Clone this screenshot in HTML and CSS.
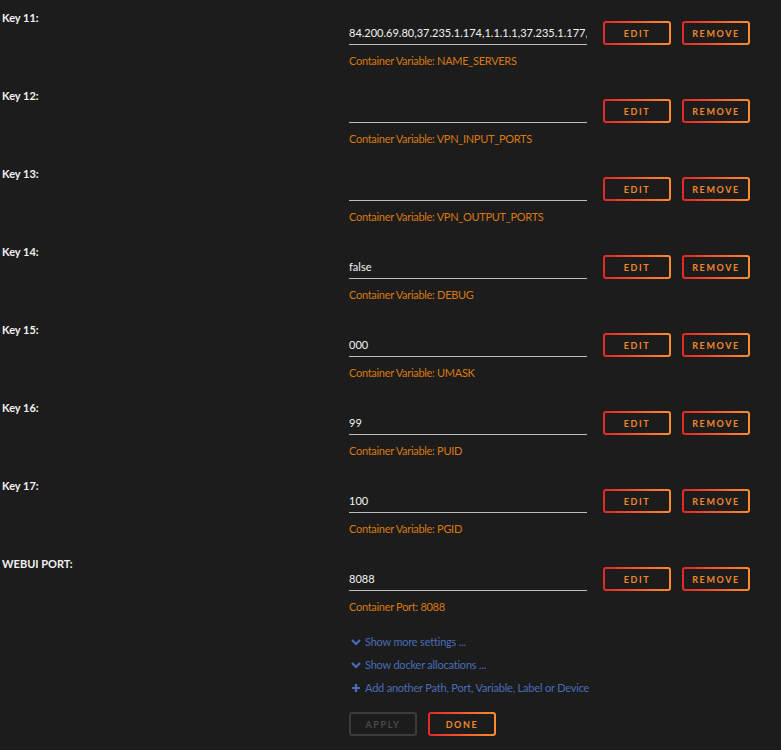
FILE: index.html
```html
<!DOCTYPE html>
<html lang="en">
<head>
    <meta charset="UTF-8">
    <meta name="viewport" content="width=device-width, initial-scale=1.0">
    <title>Container Template</title>
    <link rel="stylesheet" href="styles.css">
</head>
<body>
    <div class="config">
        <div class="row">
            <div class="label">Key 11:</div>
            <div class="field">
                <div class="line">
                    <input type="text" value="84.200.69.80,37.235.1.174,1.1.1.1,37.235.1.177,84.200.70.40,1.0.0.1">
                    <button class="btn">Edit</button>
                    <button class="btn">Remove</button>
                </div>
                <div class="hint">Container Variable: NAME_SERVERS</div>
            </div>
        </div>
        <div class="row">
            <div class="label">Key 12:</div>
            <div class="field">
                <div class="line">
                    <input type="text" value="">
                    <button class="btn">Edit</button>
                    <button class="btn">Remove</button>
                </div>
                <div class="hint">Container Variable: VPN_INPUT_PORTS</div>
            </div>
        </div>
        <div class="row">
            <div class="label">Key 13:</div>
            <div class="field">
                <div class="line">
                    <input type="text" value="">
                    <button class="btn">Edit</button>
                    <button class="btn">Remove</button>
                </div>
                <div class="hint">Container Variable: VPN_OUTPUT_PORTS</div>
            </div>
        </div>
        <div class="row">
            <div class="label">Key 14:</div>
            <div class="field">
                <div class="line">
                    <input type="text" value="false">
                    <button class="btn">Edit</button>
                    <button class="btn">Remove</button>
                </div>
                <div class="hint">Container Variable: DEBUG</div>
            </div>
        </div>
        <div class="row">
            <div class="label">Key 15:</div>
            <div class="field">
                <div class="line">
                    <input type="text" value="000">
                    <button class="btn">Edit</button>
                    <button class="btn">Remove</button>
                </div>
                <div class="hint">Container Variable: UMASK</div>
            </div>
        </div>
        <div class="row">
            <div class="label">Key 16:</div>
            <div class="field">
                <div class="line">
                    <input type="text" value="99">
                    <button class="btn">Edit</button>
                    <button class="btn">Remove</button>
                </div>
                <div class="hint">Container Variable: PUID</div>
            </div>
        </div>
        <div class="row">
            <div class="label">Key 17:</div>
            <div class="field">
                <div class="line">
                    <input type="text" value="100">
                    <button class="btn">Edit</button>
                    <button class="btn">Remove</button>
                </div>
                <div class="hint">Container Variable: PGID</div>
            </div>
        </div>
        <div class="row">
            <div class="label">WEBUI PORT:</div>
            <div class="field">
                <div class="line">
                    <input type="text" value="8088">
                    <button class="btn">Edit</button>
                    <button class="btn">Remove</button>
                </div>
                <div class="hint">Container Port: 8088</div>
            </div>
        </div>
    </div>

    <div class="extras">
        <a class="link" href="#">
            <svg class="icon" viewBox="0 0 10 10"><path d="M1 3 L5 7 L9 3" fill="none" stroke="currentColor" stroke-width="2.2"/></svg>
            Show more settings ...
        </a>
        <a class="link" href="#">
            <svg class="icon" viewBox="0 0 10 10"><path d="M1 3 L5 7 L9 3" fill="none" stroke="currentColor" stroke-width="2.2"/></svg>
            Show docker allocations ...
        </a>
        <a class="link" href="#">
            <svg class="icon" viewBox="0 0 10 10"><path d="M5 1 V9 M1 5 H9" fill="none" stroke="currentColor" stroke-width="2.2"/></svg>
            Add another Path, Port, Variable, Label or Device
        </a>
        <div class="actions">
            <button class="btn disabled" disabled>Apply</button>
            <button class="btn">Done</button>
        </div>
    </div>
</body>
</html>
```

FILE: styles.css
```css
body {
    margin: 0;
    background: #1c1c1c;
    font-family: Lato, "Open Sans", sans-serif;
    font-size: 11px;
    color: #f2f2f2;
}
.row {
    display: grid;
    grid-template-columns: 347px 1fr;
    height: 78px;
    padding-left: 2px;
}
.label {
    padding-top: 9px;
    line-height: 18px;
    font-weight: 700;
}
.field {
    padding-top: 21px;
}
.line {
    display: flex;
    align-items: flex-start;
    height: 24px;
}
.line input {
    width: 238px;
    height: 24px;
    box-sizing: border-box;
    padding: 0;
    border: 0;
    border-bottom: 1px solid #bdbdbd;
    background: transparent;
    color: #f2f2f2;
    font-family: inherit;
    font-size: 11px;
    outline: none;
    margin-right: 16px;
}
.btn {
    width: 68px;
    height: 24px;
    margin-right: 11px;
    padding: 0;
    border: 2px solid transparent;
    border-radius: 3px;
    background: linear-gradient(#1c1c1c, #1c1c1c) padding-box,
                linear-gradient(90deg, #e22828, #ff8c2f) border-box;
    color: #f0862c;
    font-family: inherit;
    font-size: 9px;
    font-weight: 700;
    letter-spacing: 1.6px;
    text-transform: uppercase;
    cursor: pointer;
}
.hint {
    margin-top: 7px;
    line-height: 18px;
    color: #d9790f;
    letter-spacing: -0.3px;
}
.extras {
    padding-left: 349px;
    padding-top: 6px;
}
.link {
    display: flex;
    align-items: center;
    height: 23px;
    color: #486dba;
    text-decoration: none;
    letter-spacing: -0.2px;
}
.icon {
    width: 10px;
    height: 10px;
    margin-left: 2px;
    margin-right: 4px;
}
.actions {
    display: flex;
    margin-top: 13px;
}
.btn.disabled {
    background: transparent;
    border-color: #3a3a3a;
    color: #4a4a4a;
    cursor: default;
}
```
